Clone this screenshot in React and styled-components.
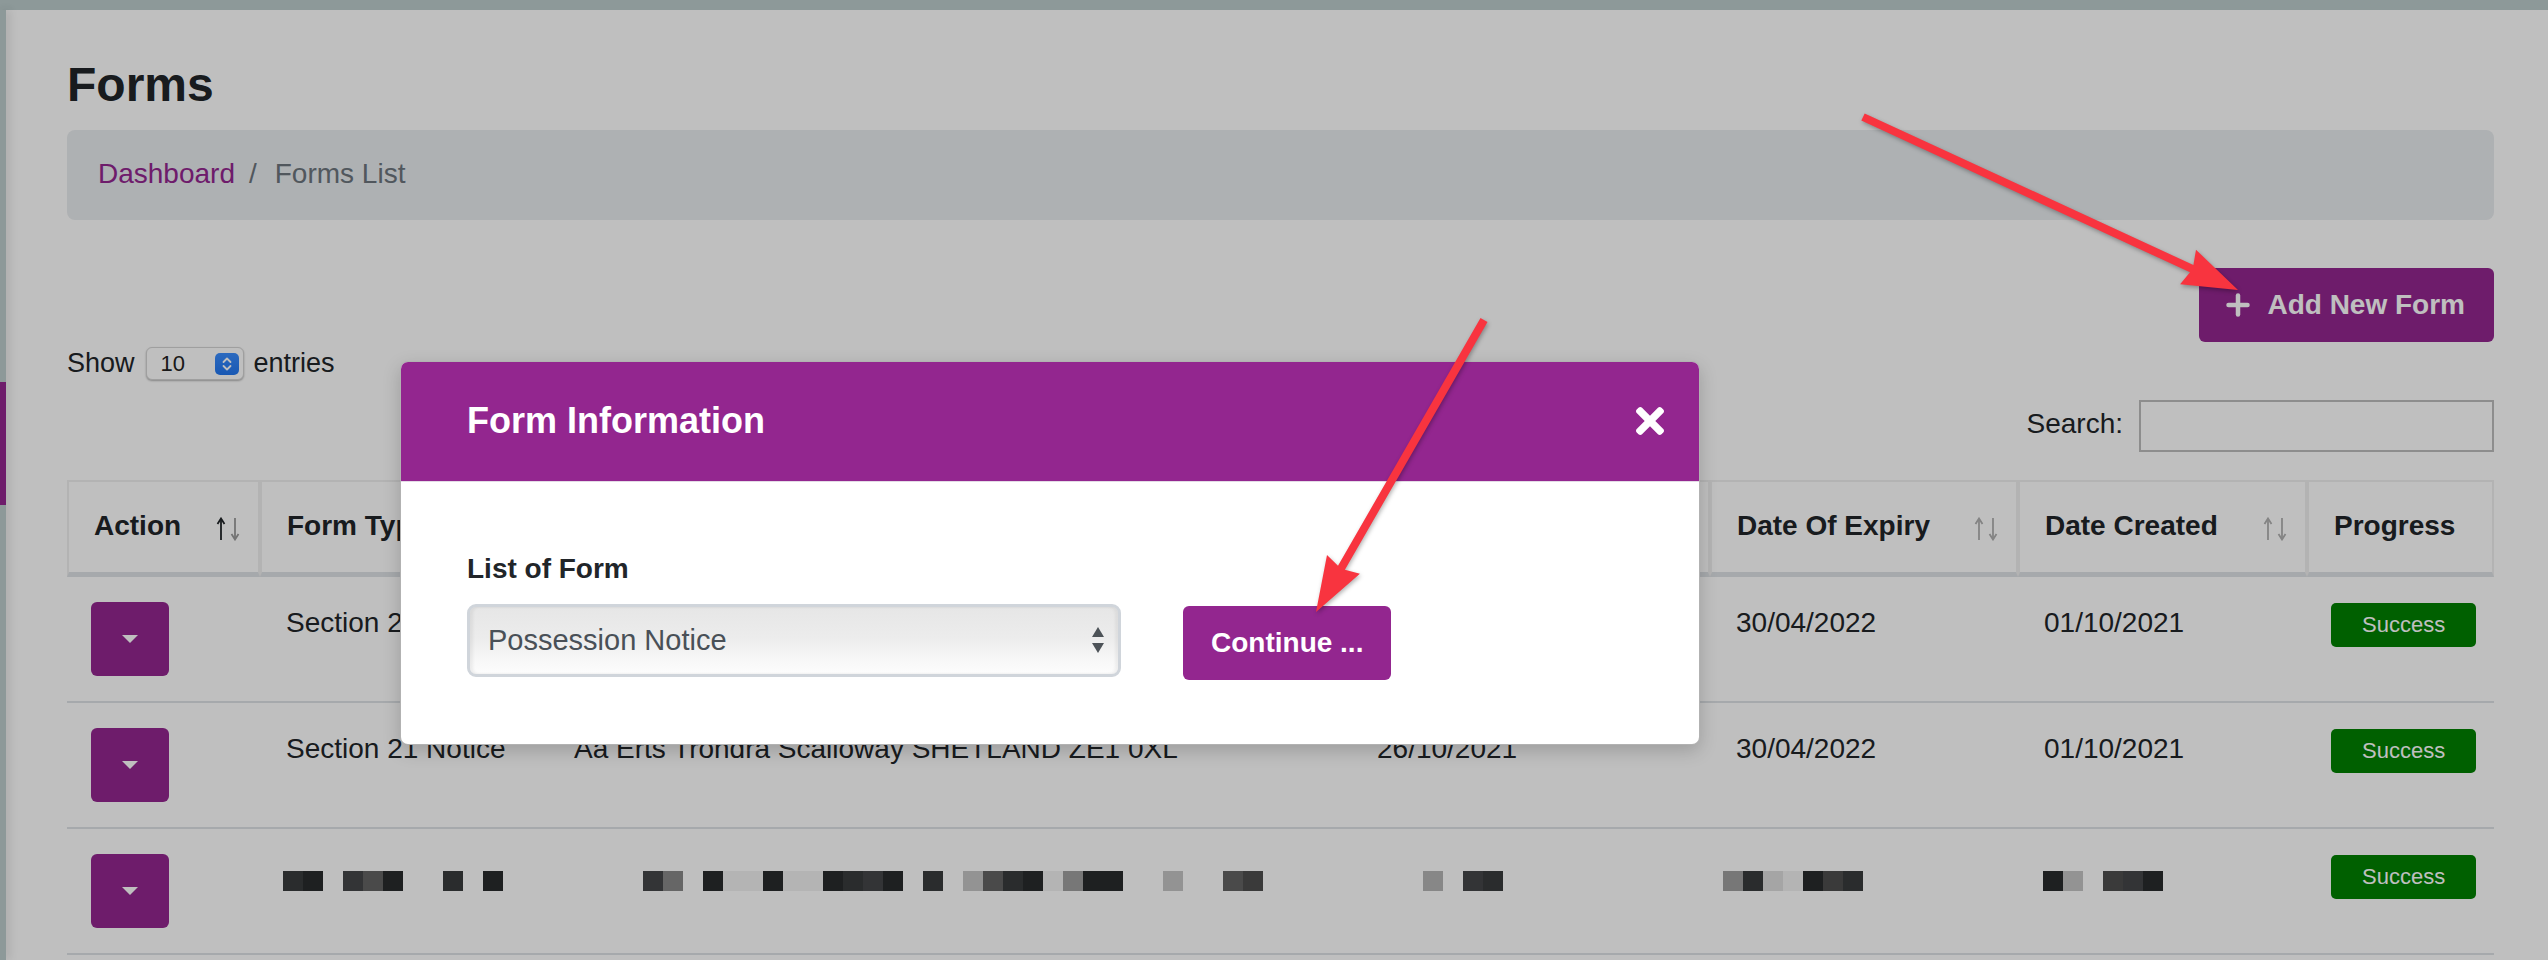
import React from "react";
import styled, { createGlobalStyle } from "styled-components";

const GlobalStyle = createGlobalStyle`
  html, body { margin: 0; padding: 0; }
  body {
    width: 2548px;
    height: 960px;
    overflow: hidden;
    background: #fff;
    color: #212529;
    font-family: "Liberation Sans", Arial, Helvetica, sans-serif;
  }
  #root { height: 960px; }
  * { box-sizing: border-box; }
`;

const Shell = styled.div`
  position: relative;
  display: grid;
  grid-template-columns: 6px 1fr;
  grid-template-rows: 10px 1fr;
  width: 2548px;
  height: 960px;
  overflow: hidden;
`;

const TopBar = styled.header`
  grid-column: 1 / -1;
  background: #bccccc;
`;

const SideBar = styled.aside`
  position: relative;
  z-index: 1;
  background: #bccccc;
  padding-top: 372px;
  box-shadow: 3px 0 10px rgba(0, 0, 0, 0.14);
`;

const SideMarker = styled.div`
  height: 123px;
  background: #93268f;
`;

const Main = styled.main`
  background: #fff;
  padding: 0 54px 0 61px;
`;

const Title = styled.h1`
  margin: 46px 0 0;
  font-size: 48px;
  line-height: 58px;
  font-weight: 700;
  color: #212529;
`;

const Breadcrumb = styled.nav`
  margin-top: 16px;
  display: flex;
  align-items: center;
  background: #e9ecef;
  border-radius: 8px;
  padding: 23px 31px 25px;
  font-size: 28px;
  line-height: 42px;
`;

const CrumbLink = styled.a`
  color: #93268f;
  text-decoration: none;
`;

const CrumbSep = styled.span`
  color: #6c757d;
  padding: 0 18px 0 14px;
`;

const CrumbCurrent = styled.span`
  color: #6c757d;
`;

const ButtonRow = styled.div`
  display: flex;
  justify-content: flex-end;
  margin-top: 48px;
`;

const PrimaryButton = styled.button`
  display: inline-flex;
  align-items: center;
  gap: ${(p) => (p.$gap ? p.$gap : 0)}px;
  border: 0;
  border-radius: 6px;
  background: #93268f;
  color: #fff;
  font-family: "Liberation Sans", Arial, sans-serif;
  font-weight: 700;
  font-size: 28px;
  line-height: 42px;
  padding: 16px ${(p) => p.$padR}px 16px ${(p) => p.$padL}px;
  margin-top: ${(p) => p.$mt || 0}px;
  cursor: pointer;
  white-space: nowrap;
`;

const LengthRow = styled.div`
  display: flex;
  align-items: center;
  margin-top: 5px;
  height: 33px;
  font-size: 27px;
  line-height: 33px;
  color: #212529;
`;

const LengthSelect = styled.div`
  display: flex;
  align-items: center;
  justify-content: space-between;
  width: 98px;
  height: 33px;
  margin: 0 10px 0 11px;
  padding: 0 4px 0 14px;
  border: 1px solid #d4d4d4;
  border-radius: 6px;
  background: #fff;
  box-shadow: 0 1px 2px rgba(0, 0, 0, 0.3);
  font-size: 22px;
  color: #222;
`;

const Stepper = styled.span`
  display: flex;
  align-items: center;
  justify-content: center;
  width: 24px;
  height: 22px;
  border-radius: 5px;
  background: linear-gradient(#3b8eff, #2176f0);
`;

const FilterRow = styled.div`
  display: flex;
  justify-content: flex-end;
  align-items: center;
  gap: 16px;
  margin-top: 20px;
  font-size: 28px;
  line-height: 42px;
`;

const FilterLabel = styled.label`
  margin-top: -4px;
`;

const SearchInput = styled.input`
  width: 355px;
  height: 52px;
  border: 2px solid #bdbdbd;
  background: #fff;
  font-size: 24px;
  padding: 0 10px;
`;

const Table = styled.table`
  margin-top: 28px;
  width: 100%;
  table-layout: fixed;
  border-collapse: separate;
  border-spacing: 0;
  font-size: 28px;
  line-height: 42px;
`;

const Th = styled.th`
  padding: 23px 16px 25px 25px;
  border: 2px solid #efefef;
  border-bottom: 5px solid #dee2e6;
  text-align: left;
  font-weight: 700;
  vertical-align: top;
  white-space: nowrap;
  overflow: hidden;
`;

const ThInner = styled.div`
  display: flex;
  align-items: center;
  justify-content: space-between;
`;

const SortWrap = styled.span`
  display: flex;
  margin-top: 5px;
`;

const Td = styled.td`
  padding: 25px 26px 25px 26px;
  border-bottom: 2px solid #dee2e6;
  vertical-align: top;
  white-space: nowrap;
  color: #212529;
`;

const ActionButton = styled.button`
  display: flex;
  align-items: center;
  justify-content: center;
  width: 78px;
  height: 74px;
  margin-left: -2px;
  border: 0;
  border-radius: 6px;
  background: #93268f;
  cursor: pointer;
  &::after {
    content: "";
    border-top: 8px solid #fff;
    border-left: 8px solid transparent;
    border-right: 8px solid transparent;
  }
`;

const Badge = styled.span`
  display: inline-block;
  margin-left: -2px;
  padding: 0 31px;
  height: 44px;
  line-height: 44px;
  border-radius: 5px;
  background: #008000;
  color: #fff;
  font-size: 22px;
`;

const MosaicRow = styled.div`
  display: flex;
  margin-top: 17px;
  margin-left: ${(p) => p.$offset}px;
`;

const Block = styled.span`
  width: 20px;
  height: 20px;
  flex: none;
  background: ${(p) => p.$c};
`;

const Backdrop = styled.div`
  position: absolute;
  inset: 0;
  z-index: 10;
  background: rgba(0, 0, 0, 0.25);
`;

const Modal = styled.div`
  position: absolute;
  top: 361px;
  left: 400px;
  width: 1300px;
  z-index: 20;
  background: #fff;
  border: 1px solid rgba(0, 0, 0, 0.3);
  border-radius: 8px;
  overflow: hidden;
  box-shadow: 0 6px 18px rgba(0, 0, 0, 0.18);
`;

const ModalHeader = styled.div`
  display: flex;
  align-items: center;
  justify-content: space-between;
  background: #93268f;
  padding: 32px 35px 33px 66px;
  border-bottom: 1px solid #e3dbe6;
`;

const ModalTitle = styled.h5`
  margin: 0;
  color: #fff;
  font-size: 36px;
  line-height: 54px;
  font-weight: 700;
`;

const CloseButton = styled.button`
  display: flex;
  padding: 0;
  border: 0;
  background: transparent;
  cursor: pointer;
`;

const ModalBody = styled.div`
  padding: 66px 66px 64px;
`;

const FieldLabel = styled.label`
  display: block;
  margin-bottom: 14px;
  font-size: 28px;
  line-height: 42px;
  font-weight: 700;
  color: #212529;
`;

const FieldRow = styled.div`
  display: flex;
  align-items: flex-start;
  gap: 62px;
`;

const SelectBox = styled.div`
  display: flex;
  align-items: center;
  justify-content: space-between;
  width: 654px;
  height: 73px;
  padding: 0 13px 0 18px;
  border: 3px solid #d0d5db;
  border-radius: 9px;
  background: linear-gradient(#e6e6e6 0%, #ececec 45%, #f6f6f6 75%, #fdfdfd 100%);
  box-shadow: inset 3px 0 3px rgba(0, 0, 0, 0.06), inset -3px 0 3px rgba(0, 0, 0, 0.05);
  font-size: 29px;
  color: #495057;
`;

const ArrowLayer = styled.svg`
  position: absolute;
  inset: 0;
  z-index: 30;
  pointer-events: none;
  filter: drop-shadow(1px 2px 2px rgba(0, 0, 0, 0.3));
`;

const palette = {
  a: "#282b2d",
  b: "#383b3d",
  c: "#444648",
  d: "#4e4e4e",
  e: "#636363",
  f: "#888888",
  g: "#9f9f9f",
  h: "#b5b5b5",
  i: "#c4c4c4",
  j: "#dcdcdc",
  k: "#f0f0f0",
  _: "transparent",
};

function Mosaic({ pattern, offset }) {
  return (
    <MosaicRow $offset={offset}>
      {pattern.split("").map((ch, i) => (
        <Block key={i} $c={palette[ch]} />
      ))}
    </MosaicRow>
  );
}

function SortIcon({ up = "#b0b0b0", down = "#b0b0b0" }) {
  return (
    <SortWrap>
      <svg width="26" height="24" viewBox="0 0 26 24" fill="none" strokeWidth="1.8">
        <g stroke={up}>
          <line x1="5" y1="23" x2="5" y2="2" />
          <polyline points="1.5,7 5,1.5 8.5,7" />
        </g>
        <g stroke={down}>
          <line x1="19" y1="1" x2="19" y2="22" />
          <polyline points="15.5,17 19,22.5 22.5,17" />
        </g>
      </svg>
    </SortWrap>
  );
}

function PlusIcon() {
  return (
    <svg width="24" height="24" viewBox="0 0 24 24" fill="none" stroke="currentColor" strokeWidth="4.5" strokeLinecap="round">
      <line x1="12" y1="2.5" x2="12" y2="21.5" />
      <line x1="2.5" y1="12" x2="21.5" y2="12" />
    </svg>
  );
}

function CloseIcon() {
  return (
    <svg width="28" height="28" viewBox="0 80 352 352" fill="#fff">
      <path d="M242.72 256l100.07-100.07c12.28-12.28 12.28-32.19 0-44.48l-22.24-22.24c-12.28-12.28-32.19-12.28-44.48 0L176 189.28 75.93 89.21c-12.28-12.28-32.19-12.28-44.48 0L9.21 111.45c-12.28 12.28-12.28 32.19 0 44.48L109.28 256 9.21 356.07c-12.28 12.28-12.28 32.19 0 44.48l22.24 22.24c12.28 12.28 32.2 12.28 44.48 0L176 322.72l100.07 100.07c12.28 12.28 32.2 12.28 44.48 0l22.24-22.24c12.28-12.28 12.28-32.19 0-44.48L242.72 256z" />
    </svg>
  );
}

function StepperIcon() {
  return (
    <svg width="12" height="16" viewBox="0 0 12 16" fill="none" stroke="#fff" strokeWidth="1.8" strokeLinecap="round" strokeLinejoin="round">
      <polyline points="2.5,6 6,2.5 9.5,6" />
      <polyline points="2.5,10 6,13.5 9.5,10" />
    </svg>
  );
}

function UpDownIcon() {
  return (
    <svg width="14" height="27" viewBox="0 0 14 27" fill="#4d5358">
      <polygon points="7,0 13,10 1,10" />
      <polygon points="1,16 13,16 7,26" />
    </svg>
  );
}

function arrowPoints(sx, sy, tx, ty, headLen = 51, headHalf = 19, shaftHalf = 4) {
  const dx = tx - sx;
  const dy = ty - sy;
  const len = Math.hypot(dx, dy);
  const ux = dx / len;
  const uy = dy / len;
  const nx = -uy;
  const ny = ux;
  const bx = tx - ux * headLen;
  const by = ty - uy * headLen;
  const pts = [
    [sx + nx * shaftHalf, sy + ny * shaftHalf],
    [bx + nx * shaftHalf, by + ny * shaftHalf],
    [bx + nx * headHalf - ux * 4, by + ny * headHalf - uy * 4],
    [tx, ty],
    [bx - nx * headHalf - ux * 4, by - ny * headHalf - uy * 4],
    [bx - nx * shaftHalf, by - ny * shaftHalf],
    [sx - nx * shaftHalf, sy - ny * shaftHalf],
  ];
  return pts.map((p) => p.map((v) => v.toFixed(1)).join(",")).join(" ");
}

const columns = [
  { label: "Action", width: 193, sort: { up: "#212529", down: "#9a9a9a" } },
  { label: "Form Type", width: 288, sort: {} },
  { label: "Address", width: 803, sort: {} },
  { label: "Date Of Service", width: 359, sort: {} },
  { label: "Date Of Expiry", width: 308, sort: {} },
  { label: "Date Created", width: 289, sort: {} },
  { label: "Progress", width: 187, sort: null },
];

const rows = [
  {
    type: "Section 21 Notice",
    address: "Aa Erts Trondra Scalloway SHETLAND ZE1 0XL",
    served: "26/10/2021",
    expiry: "30/04/2022",
    created: "01/10/2021",
  },
  {
    type: "Section 21 Notice",
    address: "Aa Erts Trondra Scalloway SHETLAND ZE1 0XL",
    served: "26/10/2021",
    expiry: "30/04/2022",
    created: "01/10/2021",
  },
];

export default function App() {
  return (
    <>
      <GlobalStyle />
      <Shell>
        <TopBar />
        <SideBar>
          <SideMarker />
        </SideBar>
        <Main>
          <Title>Forms</Title>
          <Breadcrumb>
            <CrumbLink href="#">Dashboard</CrumbLink>
            <CrumbSep>/</CrumbSep>
            <CrumbCurrent>Forms List</CrumbCurrent>
          </Breadcrumb>

          <ButtonRow>
            <PrimaryButton $gap={17} $padL={27} $padR={29}>
              <PlusIcon />
              Add New Form
            </PrimaryButton>
          </ButtonRow>

          <LengthRow>
            Show
            <LengthSelect>
              10
              <Stepper>
                <StepperIcon />
              </Stepper>
            </LengthSelect>
            entries
          </LengthRow>

          <FilterRow>
            <FilterLabel>Search:</FilterLabel>
            <SearchInput type="search" />
          </FilterRow>

          <Table>
            <colgroup>
              {columns.map((c) => (
                <col key={c.label} style={{ width: c.width }} />
              ))}
            </colgroup>
            <thead>
              <tr>
                {columns.map((c) => (
                  <Th key={c.label}>
                    <ThInner>
                      <span>{c.label}</span>
                      {c.sort && <SortIcon {...c.sort} />}
                    </ThInner>
                  </Th>
                ))}
              </tr>
            </thead>
            <tbody>
              {rows.map((r, i) => (
                <tr key={i}>
                  <Td>
                    <ActionButton aria-label="Actions" />
                  </Td>
                  <Td>{r.type}</Td>
                  <Td>{r.address}</Td>
                  <Td>{r.served}</Td>
                  <Td>{r.expiry}</Td>
                  <Td>{r.created}</Td>
                  <Td>
                    <Badge>Success</Badge>
                  </Td>
                </tr>
              ))}
              <tr>
                <Td>
                  <ActionButton aria-label="Actions" />
                </Td>
                <Td>
                  <Mosaic pattern="ba_cea__b_a" offset={-3} />
                </Td>
                <Td>
                  <Mosaic pattern="cf_akkakkabca_b_iebakgaa__i__ed" offset={69} />
                </Td>
                <Td>
                  <Mosaic pattern="h_cb" offset={46} />
                </Td>
                <Td>
                  <Mosaic pattern="gbjkadb" offset={-13} />
                </Td>
                <Td>
                  <Mosaic pattern="ai_dca" offset={-1} />
                </Td>
                <Td>
                  <Badge>Success</Badge>
                </Td>
              </tr>
            </tbody>
          </Table>
        </Main>

        <Backdrop />

        <Modal role="dialog">
          <ModalHeader>
            <ModalTitle>Form Information</ModalTitle>
            <CloseButton aria-label="Close">
              <CloseIcon />
            </CloseButton>
          </ModalHeader>
          <ModalBody>
            <FieldLabel>List of Form</FieldLabel>
            <FieldRow>
              <SelectBox>
                <span>Possession Notice</span>
                <UpDownIcon />
              </SelectBox>
              <PrimaryButton $padL={28} $padR={28} $mt={2}>
                Continue ...
              </PrimaryButton>
            </FieldRow>
          </ModalBody>
        </Modal>

        <ArrowLayer width="2548" height="960" viewBox="0 0 2548 960">
          <polygon fill="#f8343f" points={arrowPoints(1863, 117, 2238, 290)} />
          <polygon fill="#f8343f" points={arrowPoints(1484, 320, 1316, 612)} />
        </ArrowLayer>
      </Shell>
    </>
  );
}
